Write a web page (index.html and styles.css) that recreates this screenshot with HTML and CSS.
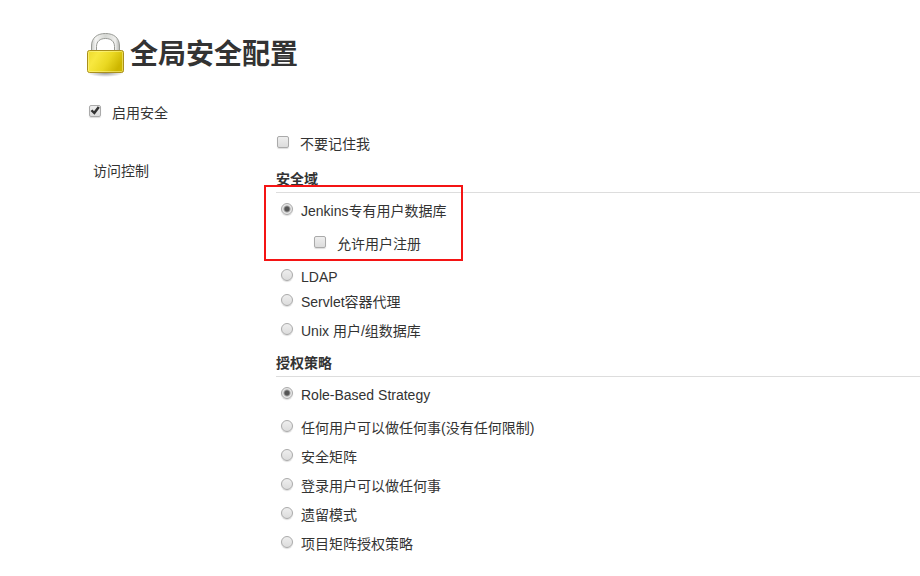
FILE: index.html
```html
<!DOCTYPE html>
<html lang="zh-CN">
<head>
    <meta charset="UTF-8">
    <meta name="viewport" content="width=device-width, initial-scale=1.0">
    <title>全局安全配置</title>
    <link rel="stylesheet" href="styles.css">
</head>
<body>
    <main>
        <header class="page-title">
            <svg class="lock" viewBox="0 0 44 48" aria-hidden="true">
                <defs>
                    <linearGradient id="gold" x1="0" y1="0" x2="1" y2="0.4">
                        <stop offset="0" stop-color="#ecd92c"/>
                        <stop offset="0.3" stop-color="#f8e840"/>
                        <stop offset="0.65" stop-color="#ead822"/>
                        <stop offset="1" stop-color="#cdb600"/>
                    </linearGradient>
                    <linearGradient id="steel" x1="0" y1="0" x2="1" y2="0">
                        <stop offset="0" stop-color="#c9cbc7"/>
                        <stop offset="0.15" stop-color="#f4f4f2"/>
                        <stop offset="0.5" stop-color="#d5d7d3"/>
                        <stop offset="0.85" stop-color="#eeeeec"/>
                        <stop offset="1" stop-color="#b4b6b2"/>
                    </linearGradient>
                    <radialGradient id="shade">
                        <stop offset="0" stop-color="#000" stop-opacity="0.4"/>
                        <stop offset="1" stop-color="#000" stop-opacity="0"/>
                    </radialGradient>
                </defs>
                <ellipse cx="21.500" cy="43" rx="18" ry="4" fill="url(#shade)"/>
                <path d="M7.500 23V16C7.500 8 13 3.500 21.500 3.500S35.500 8 35.500 16V23H30.500V16.500C30.500 11.500 27 8.500 21.500 8.500S12.500 11.500 12.500 16.500V23Z" fill="url(#steel)" stroke="#989a95"/>
                <rect x="3.500" y="20.500" width="36" height="22" rx="2" fill="url(#gold)" stroke="#a98f1c"/>
                <rect x="4.500" y="21.500" width="34" height="20" rx="1" fill="none" stroke="#fff9a0" stroke-opacity="0.5"/>
            </svg>
            <h1>全局安全配置</h1>
        </header>

        <form>
            <label class="option enable"><input type="checkbox" checked>启用安全</label>

            <div class="section">
                <div class="section-name">访问控制</div>
                <div class="settings">
                    <label class="option remember"><input type="checkbox">不要记住我</label>

                    <h2>安全域</h2>
                    <div class="options">
                        <div class="highlighted">
                            <label class="option selected"><input type="radio" name="realm" checked>Jenkins专有用户数据库</label>
                            <label class="option nested"><input type="checkbox">允许用户注册</label>
                        </div>
                        <label class="option compact"><input type="radio" name="realm">LDAP</label>
                        <label class="option"><input type="radio" name="realm">Servlet容器代理</label>
                        <label class="option"><input type="radio" name="realm">Unix 用户/组数据库</label>
                    </div>

                    <h2>授权策略</h2>
                    <div class="options">
                        <label class="option selected"><input type="radio" name="strategy" checked>Role-Based Strategy</label>
                        <label class="option"><input type="radio" name="strategy">任何用户可以做任何事(没有任何限制)</label>
                        <label class="option"><input type="radio" name="strategy">安全矩阵</label>
                        <label class="option"><input type="radio" name="strategy">登录用户可以做任何事</label>
                        <label class="option"><input type="radio" name="strategy">遗留模式</label>
                        <label class="option"><input type="radio" name="strategy">项目矩阵授权策略</label>
                    </div>
                </div>
            </div>
        </form>
    </main>
</body>
</html>
```
FILE: styles.css
```css
* {
    box-sizing: border-box;
}
body {
    font-family: "Liberation Sans", "Noto Sans CJK SC", sans-serif;
    font-size: 14px;
    line-height: 20px;
    margin: 0;
    background: #fff;
    color: #333;
}
main {
    padding: 30px 0 16px 84px;
}
.page-title {
    display: flex;
    align-items: center;
    gap: 2px;
    margin-bottom: 20px;
}
.lock {
    width: 44px;
    height: 48px;
}
h1 {
    margin: 0;
    padding-top: 2px;
    font-size: 28px;
    line-height: 40px;
}
.section {
    display: grid;
    grid-template-columns: 192px 1fr;
    margin-top: 2px;
}
.section-name {
    padding: 32px 0 0 9px;
}
h2 {
    margin: 0;
    padding: 7px 0 3px;
    border-bottom: 1px solid #ddd;
    font-size: 14px;
    line-height: 20px;
}
.options {
    padding: 3px 0 1px;
}
.option {
    display: flex;
    align-items: center;
    height: 29px;
    padding-left: 5px;
}
.option input {
    appearance: none;
    flex: none;
    width: 12px;
    height: 12px;
    margin: 0 8px 4px 0;
    border: 1px solid #aaa;
    border-radius: 2px;
    background: linear-gradient(#eee, #dcdcdc);
    box-shadow: 0 1px 1px #ddd;
}
.option input[type="radio"] {
    border-radius: 50%;
}
.option input[type="radio"]:checked {
    background: radial-gradient(circle, #555 0 2px, #e6e6e6 4px);
}
.option input[type="checkbox"] {
    margin-right: 11px;
}
.option input[type="checkbox"]:checked::before {
    content: "";
    display: block;
    width: 10px;
    height: 10px;
    background: #333;
    clip-path: polygon(5% 55%, 25% 40%, 40% 57%, 78% 8%, 98% 22%, 45% 92%);
}
.remember {
    padding-left: 1px;
    margin-bottom: 4px;
}
.selected {
    margin-bottom: 4px;
}
.nested {
    padding-left: 38px;
    margin-bottom: 8px;
}
.compact {
    height: 21px;
}
.highlighted {
    position: relative;
}
.highlighted::after {
    content: "";
    position: absolute;
    top: -11px;
    left: -12px;
    box-sizing: border-box;
    width: 199px;
    height: 76px;
    border: 2px solid #f41414;
    pointer-events: none;
}
```
